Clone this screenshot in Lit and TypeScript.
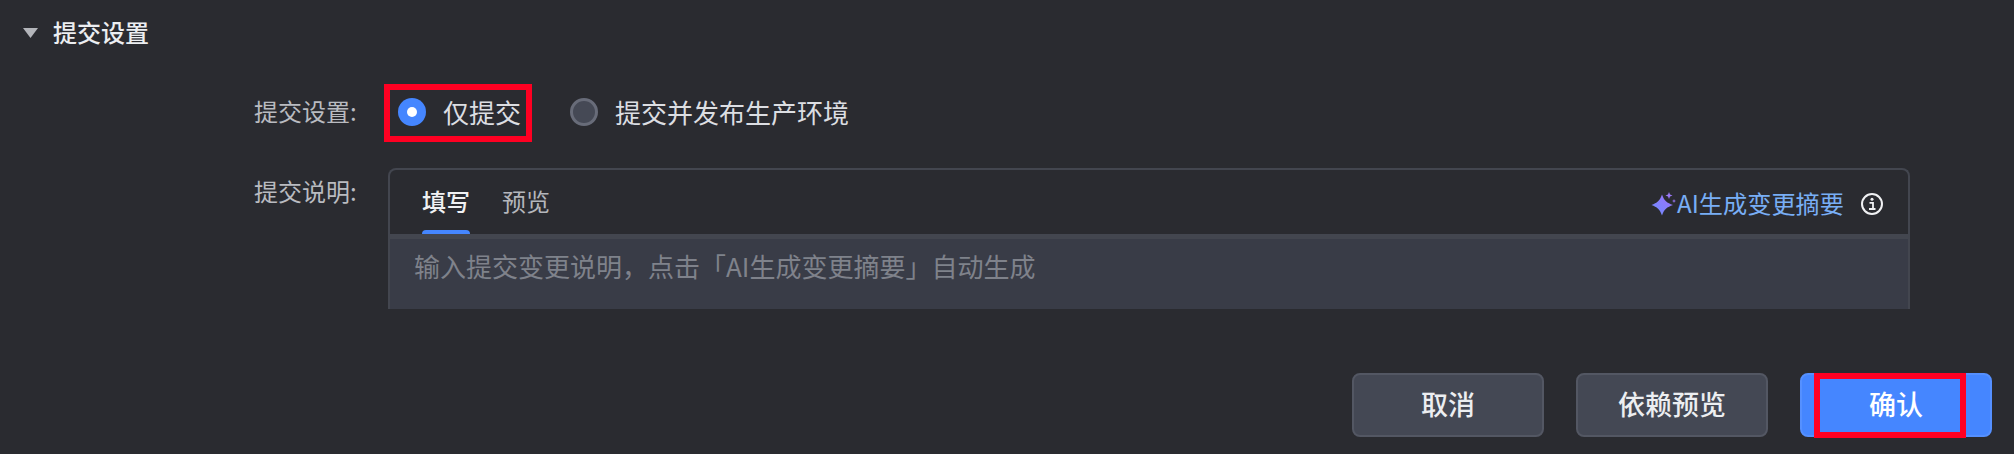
import { LitElement, html, css } from "lit";
import { customElement } from "lit/decorators.js";

@customElement("app-root")
export class AppRoot extends LitElement {
  static styles = css`
    :host {
      display: block;
      width: 2014px;
      height: 454px;
      overflow: hidden;
      background: #2a2b30;
      font-family: "Noto Sans CJK SC", "Noto Sans", sans-serif;
      color: #e6e7ea;
    }
    .page {
      display: flex;
      flex-direction: column;
      height: 454px;
    }
    .head {
      display: flex;
      align-items: center;
      gap: 15px;
      height: 62px;
      margin-bottom: 2px;
      padding-left: 23px;
      font-size: 24px;
      font-weight: 500;
      color: #eceef1;
    }
    .caret {
      width: 15px;
      height: 10px;
      margin-top: 4px;
      background: #b3b5ba;
      clip-path: polygon(0 0, 100% 0, 50% 100%);
    }
    .row {
      display: grid;
      grid-template-columns: 135px 1fr;
      padding-left: 254px;
      padding-right: 104px;
    }
    .label {
      font-size: 24px;
      color: #b9bbc0;
      line-height: 34px;
    }
    .row1 .label {
      margin-top: 30px;
    }
    .radios {
      display: flex;
      margin-top: 20px;
      margin-left: -5px;
      gap: 24px;
    }
    .radio {
      box-sizing: border-box;
      height: 58px;
      display: flex;
      align-items: center;
      gap: 17px;
      padding: 0 5px 2px 8px;
      border: 6px solid transparent;
      font-size: 26px;
      line-height: 30px;
      color: #dcdee2;
    }
    .radio.marked {
      border-color: #ff0022;
    }
    .dot {
      width: 28px;
      height: 28px;
      border-radius: 50%;
      box-sizing: border-box;
      display: flex;
      align-items: center;
      justify-content: center;
    }
    .dot.on {
      background: #4586ff;
    }
    .dot.on::after {
      content: "";
      width: 10px;
      height: 10px;
      border-radius: 50%;
      background: #fff;
    }
    .dot.off {
      background: #454955;
      border: 3px solid #686c79;
    }
    .row2 {
      margin-top: 26px;
    }
    .row2 .label {
      margin-top: 6px;
    }
    .card {
      box-sizing: border-box;
      height: 141px;
      border: 2px solid #43464f;
      border-bottom: none;
      border-radius: 8px 8px 0 0;
      overflow: hidden;
      display: flex;
      flex-direction: column;
      margin-left: -1px;
    }
    .tabs {
      display: flex;
      align-items: stretch;
      height: 64px;
      flex: none;
      padding: 0 25px 0 32px;
      font-size: 24px;
    }
    .tab {
      position: relative;
      display: flex;
      align-items: center;
      padding-bottom: 4px;
      color: #b4b6bb;
      margin-right: 32px;
    }
    .tab.on {
      color: #f0f1f3;
      font-weight: 500;
    }
    .tab.on::after {
      content: "";
      position: absolute;
      left: 0;
      right: 0;
      bottom: 0;
      height: 4px;
      border-radius: 4px 4px 0 0;
      background: #4586ff;
    }
    .spacer {
      flex: 1;
    }
    .ai {
      display: flex;
      align-items: center;
      color: #78aef5;
      font-size: 24.2px;
    }
    .ai svg {
      display: block;
      margin-top: 6px;
    }
    .info {
      display: block;
      margin-left: 17px;
      margin-top: 4px;
      align-self: center;
    }
    .body {
      flex: 1;
      background: #393c47;
      border-top: 5px solid #43464f;
      padding: 8px 24px;
      font-size: 26px;
      line-height: 38px;
      color: #7f828b;
    }
    .foot {
      display: flex;
      justify-content: flex-end;
      gap: 32px;
      padding: 64px 22px 0 0;
    }
    .btn {
      position: relative;
      box-sizing: border-box;
      width: 192px;
      height: 64px;
      padding-bottom: 3px;
      display: flex;
      align-items: center;
      justify-content: center;
      border-radius: 8px;
      border: 2px solid #535763;
      background: #444854;
      color: #eceef1;
      font-size: 27px;
      font-weight: 500;
    }
    .btn.primary {
      background: #4586ff;
      border-color: #5590ff;
      color: #fff;
    }
    .mark {
      position: absolute;
      left: 12px;
      right: 24px;
      top: -2px;
      bottom: -3px;
      border: 6px solid #ff0022;
      box-sizing: border-box;
      pointer-events: none;
    }
  `;

  render() {
    return html`
      <div class="page">
        <div class="head"><span class="caret"></span><span>提交设置</span></div>
        <div class="row row1">
          <div class="label">提交设置:</div>
          <div class="radios">
            <div class="radio marked"><span class="dot on"></span><span>仅提交</span></div>
            <div class="radio"><span class="dot off"></span><span>提交并发布生产环境</span></div>
          </div>
        </div>
        <div class="row row2">
          <div class="label">提交说明:</div>
          <div class="card">
            <div class="tabs">
              <div class="tab on">填写</div>
              <div class="tab">预览</div>
              <div class="spacer"></div>
              <div class="ai">
                <svg width="26" height="26" viewBox="0 0 26 26">
                  <defs>
                    <linearGradient id="g" x1="0" y1="1" x2="1" y2="0">
                      <stop offset="0" stop-color="#6a8eff"></stop>
                      <stop offset="1" stop-color="#a070f8"></stop>
                    </linearGradient>
                  </defs>
                  <path d="M11 2.500C13 8.500 16 11 22 13C16 15 13 17.500 11 23.500C9 17.500 6 15 0.500 13C6 11 9 8.500 11 2.500Z" fill="url(#g)"></path>
                  <path d="M18 0L19 2.500L21.500 3.500L19 4.500L18 7L17 4.500L14.500 3.500L17 2.500Z" fill="#9a78f5"></path>
                  <path d="M23 7L23.600 8.400L25 9L23.600 9.600L23 11L22.400 9.600L21 9L22.400 8.400Z" fill="#9a78f5"></path>
                </svg>
                <span>AI生成变更摘要</span>
              </div>
              <svg class="info" width="22" height="22" viewBox="0 0 22 22" fill="none">
                <circle cx="11" cy="11" r="10" stroke="#f0f1f3" stroke-width="2"></circle>
                <circle cx="11" cy="6.300" r="1.500" fill="#f0f1f3"></circle>
                <path d="M8.500 9.800H12V15.800M8 16H14.500" stroke="#f0f1f3" stroke-width="1.800"></path>
              </svg>
            </div>
            <div class="body">输入提交变更说明，点击「AI生成变更摘要」自动生成</div>
          </div>
        </div>
        <div class="foot">
          <div class="btn">取消</div>
          <div class="btn">依赖预览</div>
          <div class="btn primary">确认<span class="mark"></span></div>
        </div>
      </div>
    `;
  }
}
